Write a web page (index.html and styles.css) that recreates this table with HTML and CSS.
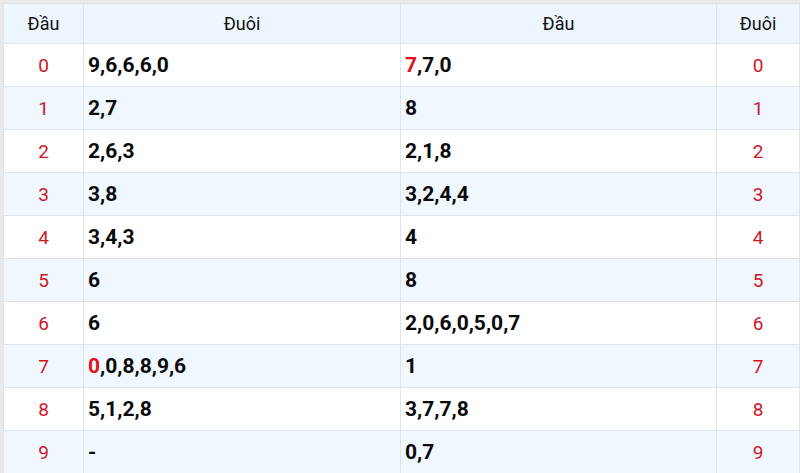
FILE: index.html
```html
<!DOCTYPE html>
<html>
<head>
<meta charset="utf-8">
<link rel="stylesheet" href="styles.css">
</head>
<body>
<div class="frame">
<table class="loto">
  <thead>
    <tr><th class="c1">Đầu</th><th class="c2">Đuôi</th><th class="c3">Đầu</th><th class="c4">Đuôi</th></tr>
  </thead>
  <tbody>
    <tr><td class="key">0</td><td class="val">9,6,6,6,0</td><td class="val"><span class="hl">7</span>,7,0</td><td class="key">0</td></tr>
    <tr><td class="key">1</td><td class="val">2,7</td><td class="val">8</td><td class="key">1</td></tr>
    <tr><td class="key">2</td><td class="val">2,6,3</td><td class="val">2,1,8</td><td class="key">2</td></tr>
    <tr><td class="key">3</td><td class="val">3,8</td><td class="val">3,2,4,4</td><td class="key">3</td></tr>
    <tr><td class="key">4</td><td class="val">3,4,3</td><td class="val">4</td><td class="key">4</td></tr>
    <tr><td class="key">5</td><td class="val">6</td><td class="val">8</td><td class="key">5</td></tr>
    <tr><td class="key">6</td><td class="val">6</td><td class="val">2,0,6,0,5,0,7</td><td class="key">6</td></tr>
    <tr><td class="key">7</td><td class="val"><span class="hl">0</span>,0,8,8,9,6</td><td class="val">1</td><td class="key">7</td></tr>
    <tr><td class="key">8</td><td class="val">5,1,2,8</td><td class="val">3,7,7,8</td><td class="key">8</td></tr>
    <tr><td class="key">9</td><td class="val">-</td><td class="val">0,7</td><td class="key">9</td></tr>
  </tbody>
</table>
</div>
</body>
</html>
```
FILE: styles.css
```css
html, body {
  margin: 0;
  padding: 0;
  background: #f7f7f7;
}
body {
  width: 800px;
  height: 473px;
  overflow: hidden;
  font-family: Roboto, "Liberation Sans", sans-serif;
}
.frame {
  padding: 3px 5px 0 3px;
  background: #e9e9e9;
  height: 470px;
}
.loto {
  width: 792px;
  border-collapse: collapse;
  table-layout: fixed;
  background: #fff;
}
.c1 { width: 79px; }
.c2 { width: 316px; }
.c3 { width: 315px; }
.c4 { width: 82px; }
.loto th, .loto td {
  border: 1px solid #dde4eb;
  padding: 0;
}
.loto th {
  height: 39px;
  background: #eef6fd;
  font-weight: 400;
  font-size: 18px;
  color: #111;
  text-align: center;
}
.loto td {
  height: 42px;
}
.loto tbody tr:nth-child(even) td {
  background: #f0f7fe;
}
.key {
  text-align: center;
  color: #d0161f;
  font-size: 19px;
}
.val {
  text-align: left;
  padding-left: 4px !important;
  font-weight: 700;
  font-size: 21px;
  color: #0a0a0a;
}
.hl {
  color: #e0121b;
}
```
